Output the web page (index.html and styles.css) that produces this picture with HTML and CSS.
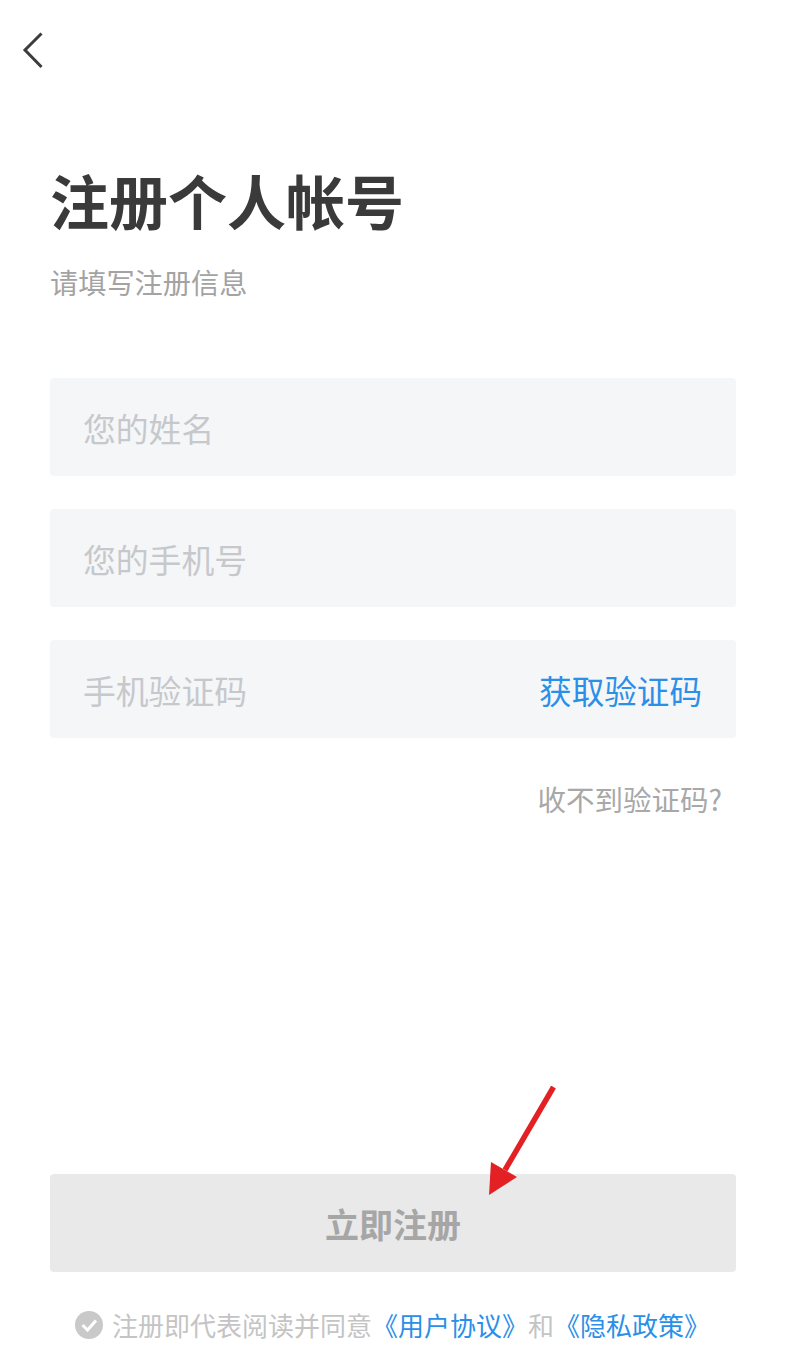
FILE: index.html
```html
<!DOCTYPE html>
<html lang="zh-CN">
<head>
    <meta charset="UTF-8">
    <meta name="viewport" content="width=device-width, initial-scale=1.0">
    <title>注册个人帐号</title>
    <link rel="stylesheet" href="styles.css">
</head>
<body>
    <div class="page">
        <a class="back" href="#">
            <svg width="24" height="38" viewBox="0 0 24 38">
                <path d="M19.5 2.5 L3 19 L19.5 36" fill="none" stroke="#3c3c3c" stroke-width="3"/>
            </svg>
        </a>
        <h1 class="title">注册个人帐号</h1>
        <p class="subtitle">请填写注册信息</p>

        <div class="form">
            <div class="field"><span class="placeholder">您的姓名</span></div>
            <div class="field"><span class="placeholder">您的手机号</span></div>
            <div class="field">
                <span class="placeholder">手机验证码</span>
                <a class="get-code" href="#">获取验证码</a>
            </div>
        </div>
        <div class="no-code">收不到验证码?</div>

        <div class="submit-wrap">
            <button class="submit">立即注册</button>
            <svg class="arrow" width="72" height="112" viewBox="0 0 72 112">
                <path d="M68.5 1 L20 84" fill="none" stroke="#e32024" stroke-width="5.5"/>
                <path d="M6 76 L32 91 L4 109 Z" fill="#e32024"/>
            </svg>
        </div>

        <div class="agreement">
            <svg class="check" width="28" height="28" viewBox="0 0 28 28">
                <circle cx="14" cy="14" r="14" fill="#c9c9c9"/>
                <path d="M7.5 14 L12.5 19 L21 9.5" fill="none" stroke="#fff" stroke-width="3"/>
            </svg>
            <span>注册即代表阅读并同意</span><a href="#">《用户协议》</a><span>和</span><a href="#">《隐私政策》</a>
        </div>
    </div>
</body>
</html>
```

FILE: styles.css
```css
body {
    margin: 0;
    background: #fff;
    font-family: "Noto Sans CJK SC", "Noto Sans", sans-serif;
}

.page {
    display: flex;
    flex-direction: column;
    box-sizing: border-box;
    width: 786px;
    height: 1354px;
    padding: 31px 50px 0;
    overflow: hidden;
}

.back {
    display: block;
    width: 24px;
    height: 38px;
    margin-left: -28px;
}

.title {
    margin: 95px 0 0;
    font-size: 59px;
    line-height: 72px;
    font-weight: 700;
    color: #3a3a3a;
}

.subtitle {
    margin: 26px 0 0;
    font-size: 28.2px;
    line-height: 40px;
    color: #a3a3a3;
}

.form {
    display: flex;
    flex-direction: column;
    gap: 33px;
    margin-top: 76px;
}

.field {
    display: flex;
    justify-content: space-between;
    align-items: center;
    height: 98px;
    padding: 0 34px 0 33px;
    background: #f5f6f8;
    border-radius: 4px;
}

.placeholder {
    font-size: 32.8px;
    color: #c6c8cc;
}

.get-code {
    font-size: 32.6px;
    color: #2b8fe8;
    text-decoration: none;
}

.no-code {
    margin-top: 41px;
    padding-right: 14px;
    text-align: right;
    font-size: 28.5px;
    line-height: 40px;
    color: #a8a8a8;
}

.submit-wrap {
    position: relative;
    margin-top: 355px;
}

.submit {
    display: block;
    width: 100%;
    height: 98px;
    border: none;
    border-radius: 4px;
    background: #e9e9e9;
    color: #a6a6a6;
    font-family: inherit;
    font-size: 34px;
    font-weight: 700;
}

.arrow {
    position: absolute;
    left: 435px;
    top: -88px;
}

.agreement {
    display: flex;
    align-items: center;
    margin-top: 35px;
    padding-left: 25px;
    font-size: 26px;
    line-height: 36px;
    color: #c4c4c4;
    white-space: nowrap;
}

.check {
    margin-right: 9px;
}

.agreement a {
    color: #2b8fe8;
    text-decoration: none;
}
```
